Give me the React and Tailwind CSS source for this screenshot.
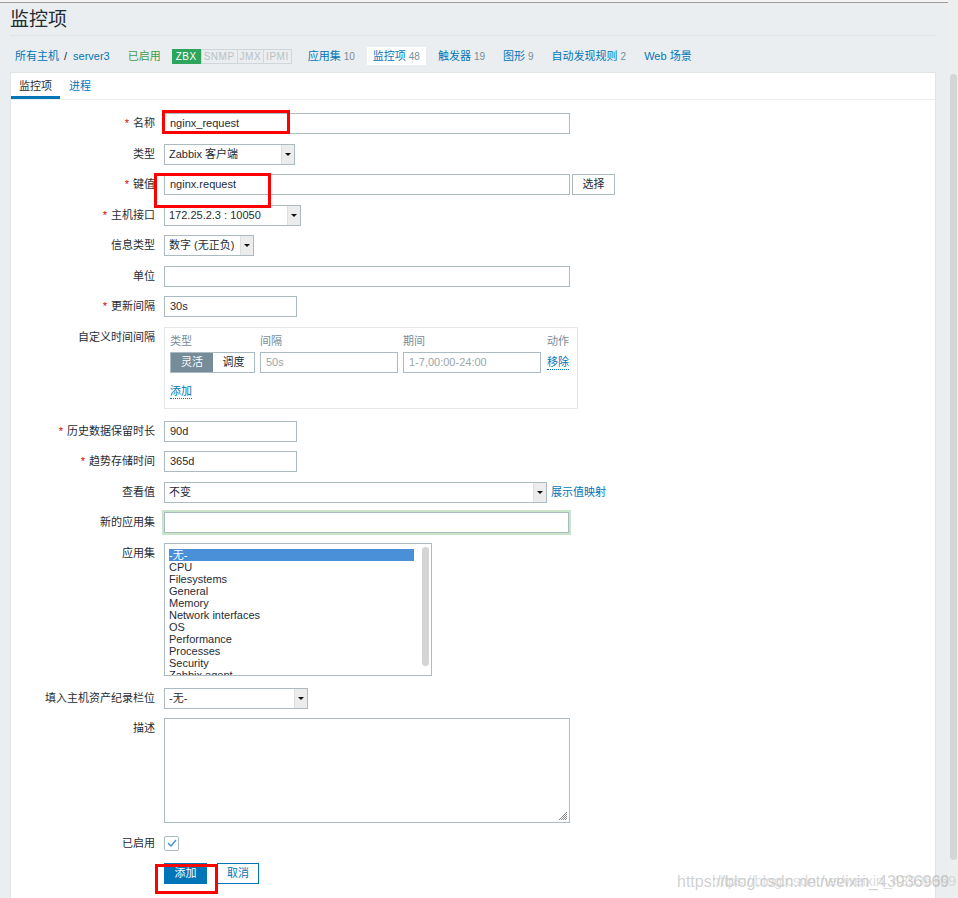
import React from 'react'

const navItems = [
  { label: '应用集', count: '10' },
  { label: '监控项', count: '48', active: true },
  { label: '触发器', count: '19' },
  { label: '图形', count: '9' },
  { label: '自动发现规则', count: '2' },
  { label: 'Web 场景' },
]

const apps = [
  '-无-',
  'CPU',
  'Filesystems',
  'General',
  'Memory',
  'Network interfaces',
  'OS',
  'Performance',
  'Processes',
  'Security',
  'Zabbix agent',
]

function Label({ children, req }) {
  return (
    <div className="w-[144px] shrink-0 h-[21px] leading-[21px] text-right text-[11px] text-[#1f2c33]">
      {req && <span className="text-[#d40000] mr-[4px]">*</span>}
      {children}
    </div>
  )
}

function Row({ label, req, children, className = '' }) {
  return (
    <div className={`flex items-start ${className}`}>
      <Label req={req}>{label}</Label>
      <div className="ml-[9px] flex items-start">{children}</div>
    </div>
  )
}

function Input({ className = '', value, placeholder }) {
  return (
    <div
      className={`h-[21px] border border-[#acbbc2] bg-white px-[5px] leading-[19px] text-[11px] whitespace-nowrap overflow-hidden ${
        placeholder ? 'text-[#9aa6ab]' : 'text-[#1f2c33]'
      } ${className}`}
    >
      {value || placeholder}
    </div>
  )
}

function Select({ className = '', value }) {
  return (
    <div className={`h-[21px] flex border border-[#acbbc2] bg-white text-[11px] text-[#1f2c33] ${className}`}>
      <div className="flex-1 px-[4px] leading-[19px] whitespace-nowrap overflow-hidden">{value}</div>
      <div className="w-[13px] bg-[#ececec] border-l border-[#dcdfe0] flex items-center justify-center">
        <div className="w-0 h-0 border-l-[3px] border-r-[3px] border-t-[3px] border-l-transparent border-r-transparent border-t-[#111]" />
      </div>
    </div>
  )
}

function Link({ children }) {
  return (
    <span className="text-[#0275b8] text-[11px] border-b border-dotted border-[#0275b8] leading-[14px]">
      {children}
    </span>
  )
}

export default function App() {
  return (
    <div className="relative w-[958px] h-[898px] overflow-hidden bg-[#ebeef0] font-['Liberation_Sans','Noto_Sans_CJK_SC',sans-serif] flex">
      {/* page */}
      <div className="flex-1 flex flex-col">
        <div className="h-[2px] bg-[#f4f4f4]" />
        <div className="h-[1px] bg-[#9d9d9d]" />

        <div className="pl-[10px] pr-[12px] flex flex-col flex-1">
          {/* title */}
          <div className="h-[33px] border-b border-[#dfe4e7] pt-[5px]">
            <h1 className="text-[19px] leading-[24px] text-[#1f2c33]">监控项</h1>
          </div>

          {/* host nav */}
          <div className="mt-[11px] h-[18px] flex items-center text-[11px] text-[#0275b8] whitespace-nowrap">
            <span className="ml-[5px]">所有主机</span>
            <span className="ml-[5px] text-[#1f2c33]">/</span>
            <span className="ml-[6px]">server3</span>
            <span className="ml-[18px] text-[#3c9d4a]">已启用</span>
            <div className="ml-[11px] flex h-[15px] text-[10px] tracking-[0.5px] leading-[13px]">
              <span className="bg-[#2da55c] text-white px-[3px] border border-[#2da55c]">ZBX</span>
              <span className="text-[#b7c1c6] px-[2px] border border-[#cfd7db]">SNMP</span>
              <span className="text-[#b7c1c6] px-[2px] border border-l-0 border-[#cfd7db]">JMX</span>
              <span className="text-[#b7c1c6] px-[2px] border border-l-0 border-[#cfd7db]">IPMI</span>
            </div>
            <div className="ml-[10px] flex items-center">
              {navItems.map((n) => (
                <div
                  key={n.label}
                  className={`h-[18px] leading-[18px] px-[6px] mr-[6px] ${n.active ? 'bg-white' : ''}`}
                >
                  {n.label}
                  {n.count && <span className="ml-[3px] text-[10px] text-[#768d99]">{n.count}</span>}
                </div>
              ))}
            </div>
          </div>

          {/* panel */}
          <div className="mt-[7px] flex-1 bg-white border border-b-0 border-[#dfe4e7]">
            <div className="h-[27px] flex border-b border-[#ebeef0] text-[11px]">
              <div className="px-[8px] h-full flex items-center border-b-[3px] border-[#0275b8] pt-[3px] text-[#1f2c33]">
                监控项
              </div>
              <div className="px-[9px] h-full flex items-center border-b-[3px] border-transparent pt-[3px] text-[#0275b8]">
                进程
              </div>
            </div>

            <div className="pt-[13px] flex flex-col gap-[9.5px]">
              <Row label="名称" req>
                <Input className="w-[406px]" value="nginx_request" />
              </Row>
              <Row label="类型">
                <Select className="w-[131px]" value="Zabbix 客户端" />
              </Row>
              <Row label="键值" req>
                <Input className="w-[406px]" value="nginx.request" />
                <div className="ml-[2px] h-[21px] w-[43px] border border-[#acbbc2] bg-white text-[11px] text-[#1f2c33] leading-[19px] text-center">
                  选择
                </div>
              </Row>
              <Row label="主机接口" req>
                <Select className="w-[137px]" value="172.25.2.3 : 10050" />
              </Row>
              <Row label="信息类型">
                <Select className="w-[90px]" value="数字 (无正负)" />
              </Row>
              <Row label="单位">
                <Input className="w-[406px]" />
              </Row>
              <Row label="更新间隔" req>
                <Input className="w-[133px]" value="30s" />
              </Row>
              <Row label="自定义时间间隔" className="h-[84.5px]">
                <div className="w-[414px] h-[82px] border border-[#e3e7ea] px-[5px] pt-[6px]">
                  <div className="grid grid-cols-[85px_138px_138px_auto] gap-x-[5px] text-[11px]">
                    <div className="h-[14px] leading-[14px] text-[#768d99]">类型</div>
                    <div className="h-[14px] leading-[14px] text-[#768d99]">间隔</div>
                    <div className="h-[14px] leading-[14px] text-[#768d99]">期间</div>
                    <div className="h-[14px] leading-[14px] text-[#768d99] ml-[1px]">动作</div>
                    <div className="mt-[4px] h-[21px] flex border border-[#acbbc2]">
                      <div className="w-[42px] bg-[#768d99] text-white text-center leading-[19px]">灵活</div>
                      <div className="flex-1 bg-white text-[#1f2c33] text-center leading-[19px]">调度</div>
                    </div>
                    <Input className="mt-[4px]" placeholder="50s" />
                    <Input className="mt-[4px]" placeholder="1-7,00:00-24:00" />
                    <div className="mt-[4px] h-[21px] flex items-center ml-[1px]">
                      <Link>移除</Link>
                    </div>
                  </div>
                  <div className="mt-[11px] h-[15px] flex items-center">
                    <Link>添加</Link>
                  </div>
                </div>
              </Row>
              <Row label="历史数据保留时长" req>
                <Input className="w-[133px]" value="90d" />
              </Row>
              <Row label="趋势存储时间" req>
                <Input className="w-[133px]" value="365d" />
              </Row>
              <Row label="查看值">
                <Select className="w-[383px]" value="不变" />
                <div className="ml-[4px] h-[21px] leading-[21px] text-[11px] text-[#0275b8]">展示值映射</div>
              </Row>
              <Row label="新的应用集">
                <Input className="w-[405px] shadow-[0_0_0_2px_#c8e4c9]" />
              </Row>
              <Row label="应用集" className="h-[135.5px]">
                <div className="w-[268px] h-[133px] border border-[#acbbc2] bg-white flex overflow-hidden">
                  <div className="w-[249px] pl-[4px] pt-[5px] text-[11px] leading-[12px] text-[#1f2c33]">
                    {apps.map((a, i) => (
                      <div key={a} className={`h-[12px] whitespace-nowrap ${i === 0 ? 'bg-[#4a90d9] text-white' : ''}`}>
                        {a}
                      </div>
                    ))}
                  </div>
                  <div className="ml-[8px] mt-[3px] w-[7px] h-[119px] rounded-[4px] bg-[#d4d4d4]" />
                </div>
              </Row>
              <Row label="填入主机资产纪录栏位">
                <Select className="w-[144px]" value="-无-" />
              </Row>
              <Row label="描述" className="h-[105px]">
                <div className="relative w-[406px] h-[105px] border border-[#acbbc2] bg-white">
                  <svg className="absolute right-[1px] bottom-[1px]" width="11" height="11" viewBox="0 0 11 11">
                    <path d="M10 2 L2 10 M10 4 L4 10 M10 6 L6 10 M10 8 L8 10" stroke="#8a8a8a" strokeWidth="1" />
                  </svg>
                </div>
              </Row>
              <Row label="已启用">
                <div className="mt-[3px] w-[15px] h-[15px] border border-[#acbbc2] rounded-[2px] bg-white flex items-center justify-center">
                  <svg width="10" height="8" viewBox="0 0 10 8">
                    <path d="M1 4 L4 7 L9 1" fill="none" stroke="#3d8fd0" strokeWidth="1.3" />
                  </svg>
                </div>
              </Row>
              <div className="flex ml-[153px] text-[11px]">
                <div className="w-[43px] h-[21px] bg-[#0275b8] text-white text-center leading-[21px]">添加</div>
                <div className="ml-[10px] w-[42px] h-[21px] border border-[#0275b8] bg-white text-[#0275b8] text-center leading-[19px]">
                  取消
                </div>
              </div>
            </div>
          </div>
        </div>
      </div>

      {/* scrollbar */}
      <div className="w-[10px] bg-[#eeeeee] flex justify-center">
        <div className="mt-[74px] w-[7px] h-[786px] rounded-[4px] bg-[#d5d5d5]" />
      </div>

      {/* red annotation boxes */}
      <div className="absolute left-[162px] top-[110px] w-[128px] h-[24px] border-[3px] border-[#ff0000]" />
      <div className="absolute left-[154px] top-[173px] w-[117px] h-[35px] border-[3px] border-[#ff0000]" />
      <div className="absolute left-[155px] top-[864px] w-[63px] h-[30px] border-[3px] border-[#ff0000]" />

      {/* watermark */}
      <div className="absolute left-[677px] top-[870px] text-[16px] text-[rgba(170,170,170,0.55)] whitespace-nowrap">
        https://blog.csdn.net/weixin_43936969
      </div>
      <div className="absolute left-[712px] top-[870px] text-[15px] text-[rgba(190,190,190,0.5)] whitespace-nowrap tracking-[-0.3px]">
        https://blog.csdn.net/weixin_43936969
      </div>
    </div>
  )
}
